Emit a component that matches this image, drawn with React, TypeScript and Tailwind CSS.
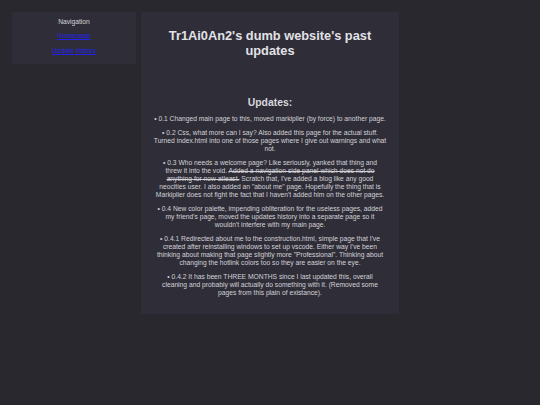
export default function App() {
  const updates: React.ReactNode[] = [
    '0.1 Changed main page to this, moved markiplier (by force) to another page.',
    '0.2 Css, what more can I say? Also added this page for the actual stuff. Turned index.html into one of those pages where I give out warnings and what not.',
    <>
      0.3 Who needs a welcome page? Like seriously, yanked that thing and threw it into the void.{' '}
      <s>Added a navigation side panel which does not do anything for now atleast.</s> Scratch that, I've added a blog
      like any good neocities user. I also added an "about me" page. Hopefully the thing that is Markiplier does not
      fight the fact that I haven't added him on the other pages.
    </>,
    "0.4 New color palette, impending obliteration for the useless pages, added my friend's page, moved the updates history into a separate page so it wouldn't interfere with my main page.",
    '0.4.1 Redirected about me to the construction.html, simple page that I\'ve created after reinstalling windows to set up vscode. Either way I\'ve been thinking about making that page slightly more "Professional". Thinking about changing the hotlink colors too so they are easier on the eye.',
    '0.4.2 It has been THREE MONTHS since I last updated this, overall cleaning and probably will actually do something with it. (Removed some pages from this plain of existance).',
  ];
  const extra = ['shrink-0 whitespace-nowrap', '-mx-[4px]', '', '', '', ''];

  return (
    <div className="min-h-[405px] bg-[#29282e] font-['Liberation_Sans',Arial,sans-serif] text-[#d2d2d6]">
      <div className="flex items-start gap-[5px] p-[12px]">
        <div className="flex w-[124px] flex-col items-center bg-[#2f2d38] pb-[9px] pt-[6px]">
          <div className="text-[6.7px] leading-[8px] text-[#d6d6da]">Navigation</div>
          <a href="#" className="mt-[6px] text-[6.8px] leading-[8px] text-[#2323e8] underline">
            Homepage
          </a>
          <a href="#" className="mt-[7px] text-[6.8px] leading-[8px] text-[#2323e8] underline">
            Update history
          </a>
        </div>
        <div className="w-[258px] bg-[#2f2d38] px-[14px] pb-[17px] pt-[16px] text-center">
          <h1 className="mx-auto w-[215px] text-[12.8px] font-bold leading-[15px] text-[#e2e2e6]">
            Tr1Ai0An2's dumb website's past updates
          </h1>
          <h2 className="mt-[39px] text-[10.4px] font-bold leading-[12px] text-[#d8d8dc]">Updates:</h2>
          <div className="mt-[6px] flex flex-col items-center gap-[6px] text-[6.72px] leading-[8px]">
            {updates.map((u, i) => (
              <p key={i} className={extra[i]}>
                • {u}
              </p>
            ))}
          </div>
        </div>
      </div>
    </div>
  );
}
